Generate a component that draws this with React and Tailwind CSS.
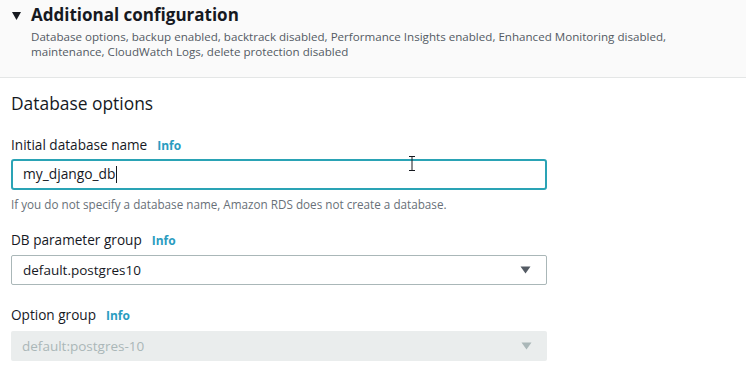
import React from "react";

const font = { fontFamily: '"Open Sans", "Noto Sans", sans-serif' };

function Caret({ color }) {
  return (
    <svg width="11" height="8" viewBox="0 0 11 8" className="block">
      <path d="M0.5 0.5 H10.5 L5.5 7.5 Z" fill={color} />
    </svg>
  );
}

function Label({ text }) {
  return (
    <div className="flex items-baseline gap-[10px] text-[13.6px] leading-[20px] text-[#16191f]">
      <span>{text}</span>
      <span className="text-[12px] font-bold text-[#2a9cc0]">Info</span>
    </div>
  );
}

export default function App() {
  return (
    <div className="relative w-[746px] h-[371px] overflow-hidden bg-white" style={font}>
      <div className="h-[78px] bg-[#fafafa] border-b border-[#e4e6e6] pl-[12px] pt-[3px]">
        <div className="flex items-center gap-[10px]">
          <svg width="9" height="8" viewBox="0 0 9 8" className="block mt-[1px]">
            <path d="M0 0 H9 L4.5 8 Z" fill="#16191f" />
          </svg>
          <span className="text-[17px] leading-[24px] font-bold text-[#16191f]">
            Additional configuration
          </span>
        </div>
        <div className="pl-[19px] mt-[2px] text-[11.6px] leading-[15px] text-[#545b64] w-[700px]">
          Database options, backup enabled, backtrack disabled, Performance Insights enabled, Enhanced Monitoring disabled,
          <br />
          maintenance, CloudWatch Logs, delete protection disabled
        </div>
      </div>
      <div className="pl-[11px] pt-[13px]">
        <div className="text-[17.4px] leading-[24px] text-[#16191f]">Database options</div>
        <div className="mt-[20px]">
          <Label text="Initial database name" />
        </div>
        <div className="mt-[3px] w-[536px] h-[31px] rounded-[3px] border-2 border-[#2aa3b5] flex items-center pl-[10px] text-[13.8px] text-[#16191f]">
          <span>my_django_db</span>
          <span className="inline-block w-[1px] h-[17px] bg-[#16191f]"></span>
        </div>
        <div className="mt-[6px] text-[11.7px] leading-[16px] text-[#687078]">
          If you do not specify a database name, Amazon RDS does not create a database.
        </div>
        <div className="mt-[18px]">
          <Label text="DB parameter group" />
        </div>
        <div className="mt-[4px] w-[536px] h-[30px] rounded-[2px] border border-[#aab7b8] flex items-center justify-between pl-[11px] pr-[15px] text-[13.5px] text-[#16191f]">
          <span>default.postgres10</span>
          <Caret color="#545b64" />
        </div>
        <div className="mt-[20px]">
          <Label text="Option group" />
        </div>
        <div className="mt-[5px] w-[536px] h-[30px] rounded-[2px] bg-[#eaeded] flex items-center justify-between pl-[11px] pr-[15px] text-[13.5px] text-[#aab7b8]">
          <span>default:postgres-10</span>
          <Caret color="#aab7b8" />
        </div>
      </div>
      <div className="absolute left-[408px] top-[156px]">
        <svg width="8" height="15" viewBox="0 0 8 15" className="block">
          <path d="M1 0.5 H7 M4 0.5 V14.5 M1 14.5 H7" stroke="#16191f" strokeWidth="1" fill="none" />
        </svg>
      </div>
    </div>
  );
}
